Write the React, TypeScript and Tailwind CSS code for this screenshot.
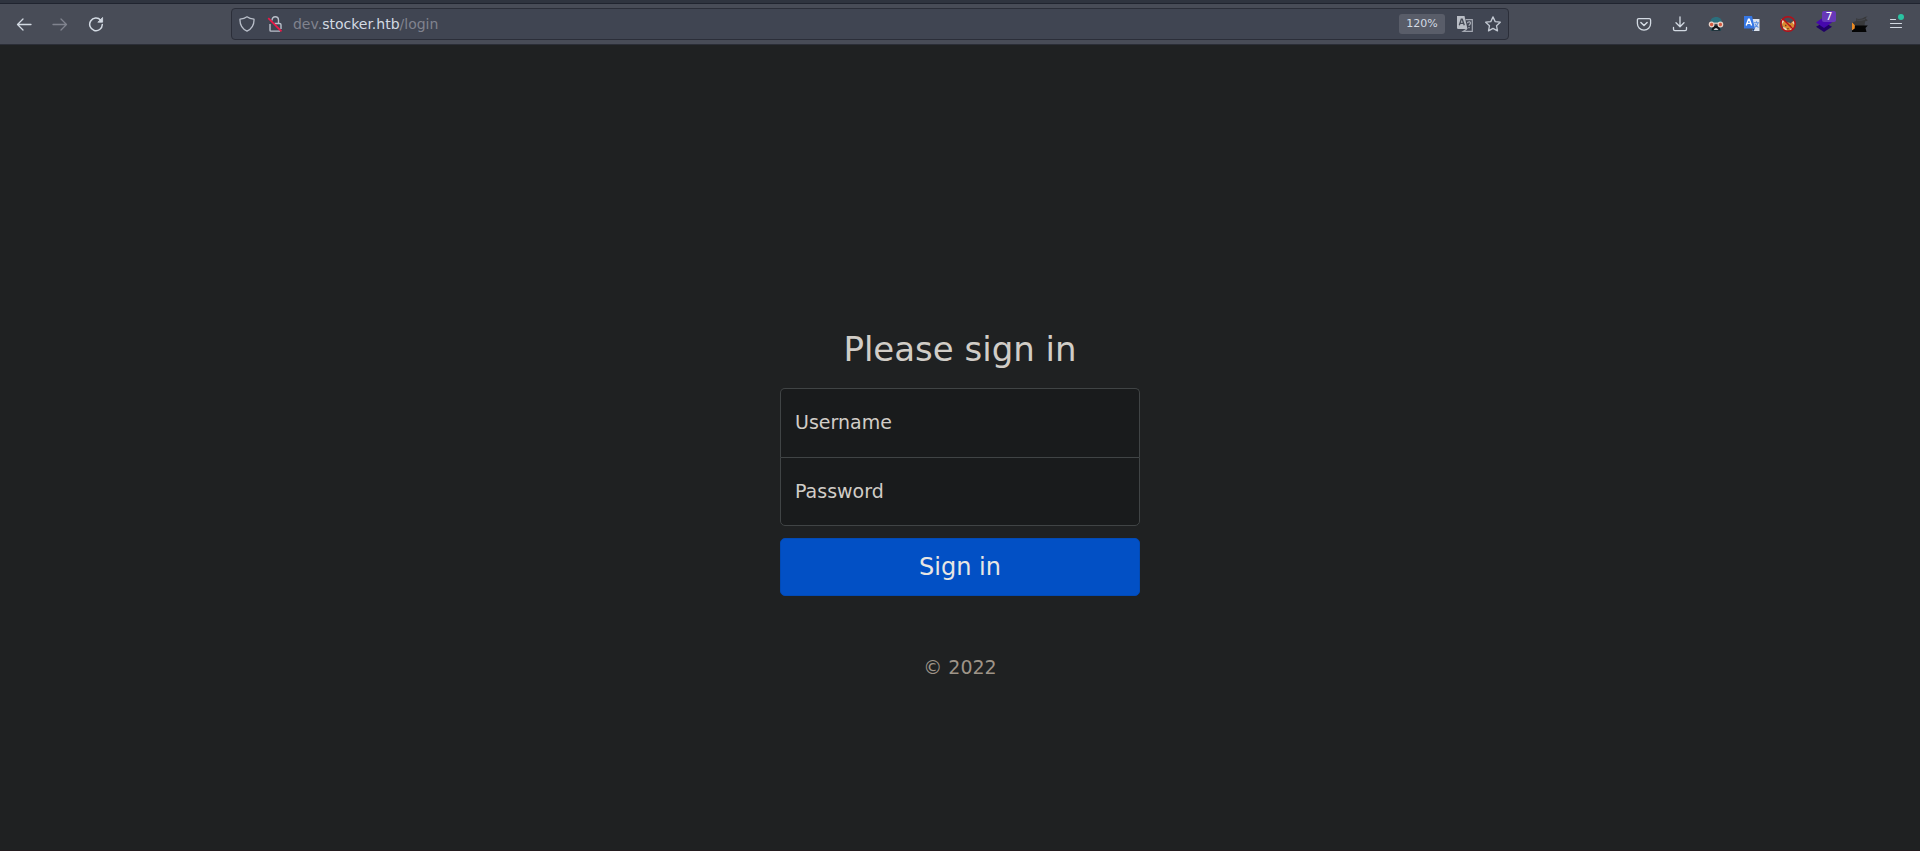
import type { ReactNode } from "react";

function ToolButton({ label, children }: { label: string; children: ReactNode }) {
  return (
    <button type="button" aria-label={label} className="flex h-9 w-9 shrink-0 items-center justify-center">
      {children}
    </button>
  );
}

function Line({ children, color = "#d3dae3" }: { children: ReactNode; color?: string }) {
  return (
    <svg width="16" height="16" viewBox="0 0 16 16" fill="none" stroke={color} strokeWidth="1.3" strokeLinecap="round" strokeLinejoin="round">
      {children}
    </svg>
  );
}

function Toolbar() {
  return (
    <header className="flex h-[45px] shrink-0 flex-col border-b border-[#2b2e37] bg-[#484c57] font-['DejaVu_Sans',sans-serif]">
      <div className="h-1 border-b border-[#20242f] bg-[#2f343f]" />
      <div className="flex flex-1 items-center px-1.5">
        <ToolButton label="Back">
          <Line>
            <path d="M15 8.5H1.5M7 3 1.5 8.5 7 14" />
          </Line>
        </ToolButton>
        <ToolButton label="Forward">
          <Line color="#80838e">
            <path d="M1 8.5h13.5M9 3l5.5 5.5L9 14" />
          </Line>
        </ToolButton>
        <ToolButton label="Reload">
          <Line>
            <path d="M12.7 4.2A6.3 6.3 0 1 0 14.3 8.5" strokeWidth="1.5" />
            <path d="M14.6 1.8v4.4h-4.4z" fill="#d3dae3" strokeWidth="0.8" />
          </Line>
        </ToolButton>
        <div className="min-w-0 grow-[100] basis-0" />
        <div className="flex h-8 min-w-0 grow-[1079] basis-0 items-center rounded border border-[#2b2e39] bg-[#404552] px-[7px]">
          <svg width="16" height="16" viewBox="0 0 16 16" fill="none" stroke="#b9bfca" strokeWidth="1.3" strokeLinejoin="round" className="shrink-0">
            <path d="M8 .8C6.4 2 3.8 2.9 1 3.1c-.3 5.5 1.8 9.7 7 12.1 5.2-2.4 7.3-6.6 7-12.1C12.2 2.9 9.6 2 8 .8z" />
          </svg>
          <svg width="16" height="16" viewBox="0 0 16 16" fill="none" stroke="#b9bfca" strokeWidth="1.4" className="ml-3 shrink-0">
            <path d="M5 4.5C5 2.3 6.3.8 8.2.8s3.3 1.5 3.3 3.5V7.500M7.500 7.500h5c1 0 1.500.5 1.500 1.300V13M3 8v6.300c0 .5.300.8.800.8H13" />
            <path d="M1.3 2.2 14.5 15.3" stroke="#f01848" strokeWidth="1.7" />
          </svg>
          <div className="relative ml-[10px] h-6 min-w-0 flex-1">
            <input id="address" type="text" className="block h-full w-full bg-transparent text-[14px] text-[#d3dae3] outline-none" />
            <label htmlFor="address" className="pointer-events-none absolute inset-0 truncate text-[14px] leading-6 text-[#80838e]">
              dev.<span className="text-[#d3dae3]">stocker.htb</span>/login
            </label>
          </div>
          <button type="button" className="h-5 w-[46px] shrink-0 rounded-[3px] bg-[#595d69] text-center text-[11px] text-[#d3dae3]">
            120%
          </button>
          <svg width="16" height="16" viewBox="0 0 16 16" className="ml-3 shrink-0">
            <path d="M0 0h7.5l3 13H1.3A1.3 1.3 0 0 1 0 11.7z" fill="#b9bdc5" />
            <path d="M8.6 3.7h6.7v11.6H6.3l3.5-2.3" fill="none" stroke="#a5a9b3" strokeWidth="1.2" />
            <path d="M2.3 9.3 4.3 3.2h.9l2.1 6.1M3 7.3h3.6" fill="none" stroke="#444955" strokeWidth="1.3" />
            <path d="M10.5 7.3c0-2 3-2 3-.2 0 1.4-1.5 1.3-1.5 2.7M12 11v1.2" fill="none" stroke="#a5a9b3" strokeWidth="1.3" />
          </svg>
          <svg width="16" height="16" viewBox="0 0 16 16" fill="none" stroke="#c3c9d3" strokeWidth="1.3" strokeLinejoin="round" className="ml-3 shrink-0">
            <path d="m8 .9 2.2 4.7 5.1.6-3.8 3.5 1 5.2L8 12.4l-4.5 2.5 1-5.2L.7 6.2l5.1-.6z" />
          </svg>
        </div>
        <div className="min-w-0 grow-[100] basis-0" />
        <ToolButton label="Save to Pocket">
          <Line>
            <path d="M2.7 2.6h10.6c.8 0 1.3.5 1.3 1.3v3.600a6.600 6.600 0 0 1-13.200 0V3.900c0-.8.500-1.300 1.300-1.300z" />
            <path d="M4.9 6.5 8 9.5l3.1-3" strokeWidth="1.5" />
          </Line>
        </ToolButton>
        <ToolButton label="Downloads">
          <Line>
            <path d="M8 .8v9.7M4 6.8l4 3.9 4-3.9M1.5 11.5v1.7c0 .9.6 1.4 1.4 1.4h10.2c.8 0 1.4-.5 1.4-1.4v-1.7" />
          </Line>
        </ToolButton>
        <ToolButton label="Disguise extension">
          <svg width="16" height="16" viewBox="0 0 16 16">
            <path d="M2 7C2 3 4.800 1 8.300 1S14 3.200 14 7z" fill="#2b6f7d" />
            <path d="M2 9h12l-1 6H3z" fill="#2d5560" />
            <path d="M5 9.500h6l1.500 5h-9z" fill="#15161a" />
            <path d="M5.5 14 7 12.2h2l1.500 1.800z" fill="#cfd3d8" />
            <circle cx="3.6" cy="8.500" r="2.300" fill="#d45a40" stroke="#e9d3c8" strokeWidth="1.200" />
            <circle cx="12.400" cy="8.500" r="2.300" fill="#d45a40" stroke="#e9d3c8" strokeWidth="1.200" />
            <path d="M5.5 7.200h5" stroke="#e9d3c8" strokeWidth="1.200" />
          </svg>
        </ToolButton>
        <ToolButton label="Translate page">
          <svg width="16" height="16" viewBox="0 0 16 16">
            <path d="M8 3h7.5v12H8.5z" fill="#dce3ee" />
            <path d="M10 6.8h5M12.5 5.3v1.5M14 7c-.4 2.2-2 3.7-3.500 4.500M11 8c.7 1.500 2 2.700 3.500 3.400" fill="none" stroke="#5e91e2" strokeWidth="1.1" />
            <path d="M0 0h8l3 12.500H0z" fill="#3777e3" />
            <path d="m8 12.500 3 0-2 3.200z" fill="#183b78" />
            <path d="M2.2 9.500 4.500 3.200h.8l2.300 6.300M3.200 7.400h3.500" fill="none" stroke="#fff" strokeWidth="1.4" />
          </svg>
        </ToolButton>
        <ToolButton label="FoxyProxy">
          <svg width="16" height="16" viewBox="0 0 16 16">
            <path d="M1.200 3.200C3 3.500 4.500 4.600 5.500 6c2 .2 4 .6 5.200 1.400C11.800 6 13 5 14.800 4.500c.4 2 0 4-.8 5.500-.3 2.500-3 4.600-6 4.600-2.800 0-5-1.300-5-3.600C1.800 8.500 1.200 6 1.200 3.200z" fill="#dc8a30" />
            <path d="M1.200 3.200 4 5 2.400 8zM14.800 4.500l-2.600 2 2 2.300zM3 11l2.500.8 2 2.800C5 14.500 3.200 13.300 3 11zM13.200 11.500l-2.200.7-1.200 2c1.700-.4 2.900-1.400 3.400-2.700z" fill="#ead9c0" />
            <path d="M5.800 8.800v1.400M10.500 9.500v1.300M7.200 12.800h1.500" stroke="#4a2d18" strokeWidth="1.100" />
            <circle cx="8" cy="8" r="7.300" fill="none" stroke="#b80f18" strokeWidth="1.400" />
            <path d="m2.800 2.800 10.400 10.400" stroke="#b80f18" strokeWidth="1.400" />
          </svg>
        </ToolButton>
        <ToolButton label="Wappalyzer">
          <span className="relative block h-4 w-4">
            <svg width="16" height="16" viewBox="0 0 16 16">
              <path d="m0 10.8 8-4.5 8 4.5-8 5.200z" fill="#210067" />
              <path d="m0 6.5 8-5.500 8 5.500-8 5.500z" fill="#4608ad" />
            </svg>
            <span className="absolute -top-[5px] left-1.5 h-[11px] w-[14px] rounded-xs bg-[#6738b8] text-center text-[11px] leading-[11px] text-white">
              7
            </span>
          </span>
        </ToolButton>
        <ToolButton label="Dark Reader">
          <svg width="16" height="16" viewBox="0 0 16 16">
            <path d="M0 6.500 2.800 8.500v4L0 14.500z" fill="#ed8a20" />
            <path d="M4 2.300c1.500.9 4 .7 6 .3C12 2 12.500.5 15.800.6c-1 .3-1.600 1.200-2.600 2 1 .2 1.600 1.200 2.600 1.400-.6 1.200-2.300.8-2.800 1.500L12.500 10h-9L.5 6.500 4 5z" fill="#38393b" />
            <path d="M4.500 4c3 .6 6 .3 8.500-.8" stroke="#4a4d55" strokeWidth="0.800" fill="none" />
            <path d="M3 9.500h12.800l-2.300 2.500 1 4H0v-1.500l2.800-2z" fill="#050505" />
          </svg>
        </ToolButton>
        <ToolButton label="Open application menu">
          <span className="relative block h-4 w-4">
            <svg width="16" height="16" viewBox="0 0 16 16" stroke="#d3dae3" strokeWidth="1.2" strokeLinecap="round">
              <path d="M2.500 3.500h5M2.500 7.500h11M2.500 11.500h11" />
            </svg>
            <span className="absolute -top-[2px] left-[10px] h-1.5 w-1.5 rounded-full bg-[#2ac3a2]" />
          </span>
        </ToolButton>
      </div>
    </header>
  );
}

function Field({ id, label, type, className }: { id: string; label: string; type: string; className: string }) {
  return (
    <div className="relative">
      <input
        id={id}
        type={type}
        className={`block h-[69px] w-full border border-[#404445] bg-[#191b1c] px-[15px] text-[19px] text-[#d1cdc7] outline-none ${className}`}
      />
      <label htmlFor={id} className="pointer-events-none absolute inset-x-0 top-0 px-[15px] py-5 text-left text-[19px] leading-[29px] text-[#d1cdc7]">
        {label}
      </label>
    </div>
  );
}

export default function App() {
  return (
    <div className="flex min-h-screen flex-col bg-[#1f2122]">
      <Toolbar />
      <main className="flex flex-1 items-center justify-center border-b border-[#231c1f] pt-[115px] font-['DejaVu_Sans',sans-serif]">
        <form className="w-full max-w-[360px] text-center" onSubmit={(e) => e.preventDefault()}>
          <h1 className="mb-[19px] text-[34px] leading-10 text-[#d1cdc7]">Please sign in</h1>
          <Field id="username" label="Username" type="text" className="rounded-t-[5px] border-b-0" />
          <Field id="password" label="Password" type="password" className="rounded-b-[5px]" />
          <button type="submit" className="mt-3 h-[58px] w-full rounded-[5px] border border-[#024ab5] bg-[#0250c5] text-[24px] text-[#e8e6e3]">
            Sign in
          </button>
          <p className="mt-[57px] text-[19px] leading-7 text-[#9e9488]">© 2022</p>
        </form>
      </main>
    </div>
  );
}
